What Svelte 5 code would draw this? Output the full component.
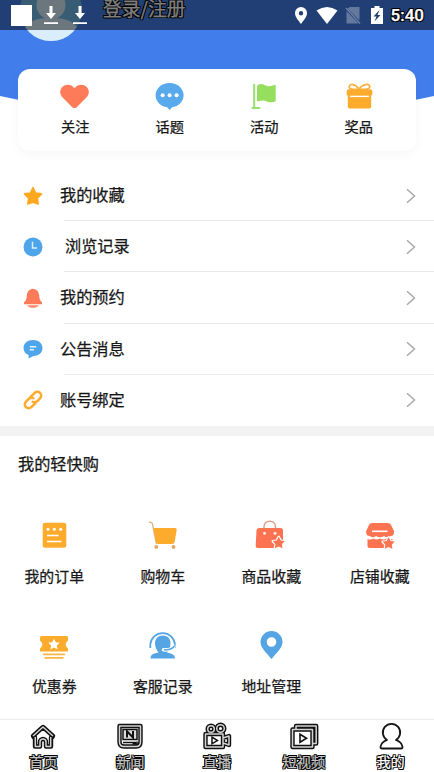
<script>
const shortcuts = [
    { label: '关注', icon: 'heart' },
    { label: '话题', icon: 'topic' },
    { label: '活动', icon: 'flag' },
    { label: '奖品', icon: 'gift' }
];

const menu = [
    { label: '我的收藏', icon: 'star' },
    { label: '浏览记录', icon: 'clock', indent: true },
    { label: '我的预约', icon: 'bell' },
    { label: '公告消息', icon: 'message' },
    { label: '账号绑定', icon: 'link' }
];

const shop = [
    { label: '我的订单', icon: 'order' },
    { label: '购物车', icon: 'cart' },
    { label: '商品收藏', icon: 'bag' },
    { label: '店铺收藏', icon: 'store' },
    { label: '优惠券', icon: 'coupon' },
    { label: '客服记录', icon: 'service' },
    { label: '地址管理', icon: 'pin' }
];

const tabs = [
    { label: '首页', icon: 'home' },
    { label: '新闻', icon: 'news' },
    { label: '直播', icon: 'live' },
    { label: '短视频', icon: 'video' },
    { label: '我的', icon: 'me' }
];

let activeTab = '我的';
</script>

{#snippet smallStar(x, y)}
    <path transform="translate({x} {y})" d="M0-6 2-2.200 6-1.700 3.200 1.400 3.800 5.500 0 3.700-3.800 5.500-3.200 1.400-6-1.700-2-2.200Z" fill="#fb7350" stroke="#fff" stroke-width="2.400" stroke-linejoin="round" paint-order="stroke" />
{/snippet}

{#snippet icon(name, size)}
    <svg width={size} height={size} viewBox="0 0 {size} {size}" fill="none">
        {#if name === 'heart'}
            <path d="M14.500 6.200C17.500 2 23.300 1.700 26.500 4.700C29.700 7.900 29.500 12.300 26.400 15.500L17 24.900Q14.500 27.300 12 24.900L2.600 15.500C-.5 12.300-.6 7.900 2.500 4.700C5.700 1.700 11.500 2 14.500 6.200Z" fill="#fd7b59" />
        {:else if name === 'topic'}
            <path d="M14.600 1C22.500 1 28.600 6.500 28.600 13.200C28.600 19.500 23.500 24.300 17 25.200L14.600 28L12.200 25.200C5.700 24.300.6 19.500.6 13.200C.6 6.500 6.700 1 14.600 1Z" fill="#58aaec" />
            <g fill="#fff">
                <circle cx="7.600" cy="13.200" r="2" />
                <circle cx="14.600" cy="13.200" r="2" />
                <circle cx="21.600" cy="13.200" r="2" />
            </g>
        {:else if name === 'flag'}
            <path d="M5.200 2.500V26M3.500 26H10.500" stroke="#9bdd70" stroke-width="2" stroke-linecap="round" />
            <path d="M8 4C12-.2 15.500 3.500 19 4.200C22 4.700 24.500 3 26.700 2.800V19C22 21.500 19 20 15.500 18.700C12.500 17.800 10 19.300 8 19.500Z" fill="#95de5e" />
        {:else if name === 'gift'}
            <path d="M15 7C11 1.500 6 1.500 5.200 4.500C4.800 7 9 8 15 7ZM15 7C19 1.500 25 1.500 25.800 4.500C26.200 7 21 8 15 7Z" stroke="#fcb03f" stroke-width="1.700" />
            <path d="M5 7.300H26Q28.300 7.300 28.300 9.500V13.300H2.700V9.500Q2.700 7.300 5 7.300ZM3.800 15.500H27.200V24Q27.200 26.600 24.800 26.600H6.200Q3.800 26.600 3.800 24Z" fill="#fcab2d" />
            <path d="M3.800 13H27.200V16H3.800Z" fill="#fcab2d" />
            <path d="M6 14.400H25" stroke="#fff" stroke-width="1.400" />
        {:else if name === 'star'}
            <path d="M12 3.600 14.600 9 20.500 9.900 16.300 14.100 17.200 20 12 18.200 6.800 20 7.700 14.100 3.500 9.900 9.400 9Z" fill="#fda81f" stroke="#fda81f" stroke-width="1.600" stroke-linejoin="round" />
        {:else if name === 'clock'}
            <circle cx="12" cy="12" r="9.500" fill="#4fa5ea" />
            <path d="M11.500 6.800V13H16" stroke="#d9f1ff" stroke-width="1.500" />
        {:else if name === 'bell'}
            <path d="M12 2.800C8.300 3 5.900 6 5.700 10.200C5.600 13.400 4.700 14.700 3 16.200V18.300H21V16.200C19.300 14.700 18.400 13.400 18.300 10.200C18.100 6 15.700 3 12 2.800Z" fill="#fd7b59" />
            <path d="M6 19.300H18C16.500 21.200 14.500 21.800 12 21.800C9.500 21.800 7.500 21.200 6 19.300Z" fill="#fd8a6b" />
        {:else if name === 'message'}
            <path d="M12 3C17.500 3 21.500 6.500 21.500 11C21.500 15.800 17.500 19 12.500 19L7.500 21.500L7.800 18.200C4.500 17 2.500 14.300 2.500 11C2.500 6.500 6.500 3 12 3Z" fill="#4fa5ea" />
            <path d="M8.800 9.700H15.200M8.800 12.700H12.800" stroke="#e4f5ff" stroke-width="1.400" />
        {:else if name === 'link'}
            <g transform="rotate(-45 12 12)" stroke="#fcab2d" stroke-width="2.500" stroke-linecap="round">
                <path d="M11.500 15.800H5.800A3.800 3.800 0 0 1 5.800 8.200H10A3.800 3.800 0 0 1 13.500 11" />
                <path d="M12.500 8.200H18.200A3.800 3.800 0 0 1 18.200 15.800H14A3.800 3.800 0 0 1 10.500 13" />
            </g>
        {:else if name === 'order'}
            <rect x="4.700" y="3.700" width="23.600" height="25" rx="2.500" fill="#fcab2d" />
            <g fill="#fff">
                <circle cx="10" cy="10.300" r="1.500" />
                <circle cx="16.300" cy="10.300" r="1.500" />
                <circle cx="22.700" cy="10.300" r="1.500" />
            </g>
            <path d="M9 16.500H20.500M9 22.500H23.500" stroke="#fff" stroke-width="1.700" />
        {:else if name === 'cart'}
            <path d="M2 3.200C5.500 3 5.500 4.500 6 8L9.500 25" stroke="#dfb27c" stroke-width="1.300" />
            <path d="M6.400 9H28.200Q30 9 29.700 10.800L27.700 22.700Q27.300 25 25 25H11.500Q9.200 25 8.800 22.700Z" fill="#fcab2d" />
            <g fill="#e2a65c">
                <circle cx="9.300" cy="27.900" r="1.900" />
                <circle cx="26.500" cy="27.900" r="1.900" />
            </g>
        {:else if name === 'bag'}
            <path d="M9 9.500V8C9 .3 20.500.3 20.500 8V9.500" stroke="#e49b83" stroke-width="1.500" />
            <path d="M4 9H25.500Q28 9 28 11.500V29H3Q.5 29 .7 26.500L1.500 11.500Q1.600 9 4 9Z" fill="#fb7350" />
            <circle cx="9.500" cy="14.300" r="1.500" fill="#ffe9e1" />
            <circle cx="20" cy="14.300" r="1.500" fill="#ffe9e1" />
            {@render smallStar(23.700, 23.800)}
        {:else if name === 'store'}
            <path d="M8 4H24Q26 4 27 6L30 12Q30.500 17 26.500 17Q23.500 19.500 20 17Q16 19.500 12 17Q8.500 19.500 6 17Q2 17 2 12.500L5 6Q6 4 8 4Z" fill="#fb7350" />
            <path d="M3.500 20Q7 21.300 9.500 19.500Q12.500 21.500 16 19.500Q19.500 21.500 22.500 19.500Q25 21 28.500 20V27Q28.500 29 26.500 29H5.500Q3.500 29 3.500 27Z" fill="#fb7350" />
            <path d="M8 12.300H23.500" stroke="#fff" stroke-width="1.600" />
            {@render smallStar(24.600, 24.300)}
        {:else if name === 'coupon'}
            <path d="M3.500 7H28.500Q30 7 30 8.500V11.500Q25.500 15.500 30 19.500V22.500H2V19.500Q6.500 15.500 2 11.500V8.500Q2 7 3.500 7Z" fill="#fcab2d" />
            <path d="M16 9.700 17.800 13.300 21.800 13.800 18.900 16.500 19.600 20.500 16 18.600 12.400 20.500 13.100 16.500 10.200 13.800 14.200 13.300Z" fill="#fff" />
            <path d="M5 25.400H27M6.500 28.900H25.500" stroke="#fcb545" stroke-width="1.700" />
        {:else if name === 'service'}
            <path d="M3.300 19V15.500A12.400 12.400 0 0 1 28 15.500V19" stroke="#55a4e3" stroke-width="1.700" />
            <path d="M15.800 6.500C20.500 6.500 23.500 9.500 23.500 14C23.500 18.500 22 21.500 20 23.500C24 24.700 28 25 28 29.500H3.500C3.500 25 7 24.700 11.500 23.500C10 21.500 8 18.500 8 14.500C8 9.800 11 6.500 15.800 6.500Z" fill="#55a4e3" />
            <path d="M27 17.500Q24 21.500 16.500 20.700" stroke="#fff" stroke-width="3.600" stroke-linecap="round" />
            <path d="M27.500 17Q24.500 21.300 17.500 20.700" stroke="#55a4e3" stroke-width="1.400" stroke-linecap="round" />
        {:else if name === 'pin'}
            <path fill-rule="evenodd" d="M16.500 2A11 11 0 0 1 27.500 13C27.500 19 21 24.500 16.500 30C12 24.500 5.500 19 5.500 13A11 11 0 0 1 16.500 2ZM16.500 8.200A4.800 4.800 0 1 0 16.500 17.800A4.800 4.800 0 1 0 16.500 8.200Z" fill="#55a4e3" />
        {:else if name === 'home'}
            <path class="outer" d="M5 14 15 5 25 14 24 15.500H23V24.500H18V20A3 3 0 0 0 12 20V24.500H7V15.500H6Z" />
            <path class="inner" d="M5 14 15 5 25 14M7.300 15V24.500H12V20A3 3 0 0 1 18 20V24.500H22.700V15" />
        {:else if name === 'news'}
            <path class="outer" d="M4.500 4H25.500V20Q25.500 24.500 21 24.500H9Q4.500 24.500 4.500 20Z" />
            <path class="inner" d="M4.500 4H25.500V20Q25.500 24.500 21 24.500H9Q4.500 24.500 4.500 20Z" />
            <path d="M8 7.500H22V17.500H8Z" fill="#ddd" stroke="#111" stroke-width="1.500" />
            <path d="M12 15.500V9.300L18 15.500V9" stroke="#111" stroke-width="2" />
            <path d="M8 20.500H21M17.500 22H22V19.500" stroke="#111" stroke-width="1.600" />
        {:else if name === 'live'}
            <circle class="outer" cx="9" cy="7" r="3.300" />
            <circle class="outer" cx="18.500" cy="6.500" r="3.800" />
            <path class="outer" d="M3.500 12H21V25H3.500ZM21 16 27 14V23L21 21" />
            <circle class="inner" cx="9" cy="7" r="3.300" />
            <circle class="inner" cx="18.500" cy="6.500" r="3.800" />
            <path class="inner" d="M3.500 12H21V25H3.500ZM21 16 27 14V23L21 21" />
            <path d="M10 15.200 15.500 18.500 10 21.800Z" stroke="#111" stroke-width="1.500" />
        {:else if name === 'video'}
            <path class="outer" d="M7 7V4H27.200V21.500H24M3.500 7.500H23.500V25H3.500Z" />
            <path class="inner" d="M7 7V4H27.200V21.500H24M3.500 7.500H23.500V25H3.500Z" />
            <path d="M11 12.200 17.500 16.200 11 20.200Z" stroke="#111" stroke-width="1.600" />
        {:else if name === 'me'}
            <path d="M11 18A8.700 8.700 0 1 1 20 18C23.500 19.300 26 21.500 26.500 25Q26.700 26.500 25 26.500H6Q4.300 26.500 4.500 25C5 21.500 7.500 19.300 11 18Z" fill="#fff" stroke="#151515" stroke-width="1.800" stroke-linejoin="round" />
        {/if}
    </svg>
{/snippet}

<div class="page">
    <header>
        <svg class="wave" width="434" height="125" viewBox="0 0 434 125">
            <path d="M0 0H434V96Q217 144 0 96Z" fill="#427eeb" />
            <clipPath id="avatar"><circle cx="51" cy="10" r="31" /></clipPath>
            <g clip-path="url(#avatar)">
                <path d="M20-21H82V41H20Z" fill="#72b9ea" />
                <circle cx="51" cy="5" r="14.500" fill="#d9edfb" />
                <path d="M24 42V29C28 21 37 18 51 18C65 18 74 21 78 29V42Z" fill="#d9edfb" />
            </g>
        </svg>
        <div class="login">登录/注册</div>
        <div class="status">
            <div class="notices">
                <i></i>
                {#each [1, 2] as n}
                    <svg width="14" height="20" viewBox="0 0 14 20">
                        <path d="M5.500 1H8.500V8H12L7 14 2 8H5.500ZM0 17.300H14V19H0Z" fill="#fff" />
                    </svg>
                {/each}
            </div>
            <div class="signals">
                <svg width="88" height="20" viewBox="0 0 88 20" fill="#fff">
                    <path fill-rule="evenodd" d="M6 2A6 6 0 0 1 12 8C12 12 8.500 15.500 6 19C3.500 15.500 0 12 0 8A6 6 0 0 1 6 2ZM6 6A2.200 2.200 0 1 0 6 10.400A2.200 2.200 0 1 0 6 6Z" />
                    <path d="M21.500 5.500Q32 -1.500 42.500 5.500L32 19Z" />
                    <path d="M55 2H64.500V15.500L52.500 3.500ZM51.500 6 63.500 18.500H51.500Z" opacity=".3" />
                    <path d="M51 3 65 18.500" stroke="#fff" stroke-width="1.300" opacity=".35" />
                    <path d="M79.500 1H84.500V3H88V19H76V3H79.500Z" />
                    <path d="M84.500 5 78.500 11.500H81.500L79.500 16.500 85.500 10H82.500Z" fill="#21406f" />
                </svg>
                <span>5:40</span>
            </div>
        </div>
    </header>

    <section class="card">
        {#each shortcuts as item}
            <div class="shortcut">
                {@render icon(item.icon, 30)}
                <span>{item.label}</span>
            </div>
        {/each}
    </section>

    <section class="menu">
        {#each menu as item}
            <div class="row">
                {@render icon(item.icon, 24)}
                <div class="label" class:indent={item.indent}>{item.label}</div>
                <svg class="arrow" width="10" height="16" viewBox="0 0 10 16">
                    <path d="M1 1.200 8.500 8 1 14.800" fill="none" stroke="#a9a9a9" stroke-width="1.500" />
                </svg>
            </div>
        {/each}
    </section>

    <section class="shop">
        <h2>我的轻快购</h2>
        <div class="grid">
            {#each shop as item}
                <div class="cell">
                    {@render icon(item.icon, 32)}
                    <span>{item.label}</span>
                </div>
            {/each}
        </div>
    </section>

    <nav>
        {#each tabs as tab}
            <button class:active={tab.label === activeTab} on:click={() => activeTab = tab.label}>
                {@render icon(tab.icon, 30)}
                <span>{tab.label}</span>
            </button>
        {/each}
    </nav>
</div>

<style>
    :global(body) {
        margin: 0;
        background: #fff;
    }

    .page {
        display: flex;
        flex-direction: column;
        width: 434px;
        height: 772px;
        overflow: hidden;
        background: #fff;
        color: #171717;
        font-family: "Noto Sans CJK SC", sans-serif;
        -webkit-text-stroke: 0.25px currentColor;
    }

    svg {
        display: block;
        flex: none;
    }

    header {
        position: relative;
        flex: none;
        height: 69px;
    }

    .wave {
        position: absolute;
        top: 0;
        left: 0;
    }

    .login {
        position: absolute;
        top: 0;
        left: 103px;
        font-size: 18.8px;
        line-height: 15px;
        color: #fff;
        text-shadow: 1px 0 #000, -1px 0 #000, 0 1px #000, 0 -1px #000, 1px 1px #000, -1px -1px #000, 1px -1px #000, -1px 1px #000;
    }

    .status {
        position: absolute;
        inset: 0 0 auto 0;
        display: flex;
        justify-content: space-between;
        box-sizing: border-box;
        height: 30px;
        padding: 5px 10px 0 11px;
        background: rgba(0, 0, 0, 0.5);
    }

    .notices {
        display: flex;
        gap: 15px;
    }

    .notices i {
        width: 21px;
        height: 21px;
        margin-right: -3px;
        background: #fff;
    }

    .signals {
        display: flex;
        gap: 8px;
    }

    .signals span {
        font-family: Roboto, sans-serif;
        font-size: 17px;
        font-weight: 500;
        line-height: 21px;
        color: #fff;
        text-shadow: 1px 0 #000, -1px 0 #000, 0 1px #000, 0 -1px #000, 1px 1px #000, -1px -1px #000, 1px -1px #000, -1px 1px #000;
    }

    .card {
        position: relative;
        display: flex;
        flex: none;
        box-sizing: border-box;
        height: 82px;
        margin: 0 18px 19px;
        padding: 13px 10px 0;
        border-radius: 12px;
        background: #fff;
        box-shadow: 0 3px 12px rgba(0, 0, 0, 0.04);
    }

    .shortcut {
        display: flex;
        flex: 1;
        flex-direction: column;
        align-items: center;
        gap: 4px;
        font-size: 14.2px;
        line-height: 20px;
    }

    .menu {
        flex: none;
        border-bottom: 10px solid #f3f3f3;
    }

    .row {
        display: flex;
        align-items: center;
        height: 51.2px;
        padding: 0 18px 0 21px;
        background: linear-gradient(#e9e9e9, #e9e9e9) 64px 100% / 370px 1px no-repeat;
    }

    .row:last-child {
        background: none;
    }

    .label {
        flex: 1;
        margin: 0 0 3px 15px;
        font-size: 16.2px;
        line-height: 24px;
    }

    .label.indent {
        margin-left: 20px;
    }

    .shop {
        flex: 1;
        min-height: 0;
    }

    h2 {
        margin: 15px 0 0 18px;
        font-size: 16.2px;
        font-weight: 400;
        line-height: 24px;
    }

    .grid {
        display: grid;
        grid-template-columns: repeat(4, 1fr);
        grid-template-rows: 110px 76px;
        margin-top: 44px;
    }

    .cell {
        display: flex;
        flex-direction: column;
        align-items: center;
        gap: 14px;
        font-size: 14.9px;
        line-height: 22px;
    }

    nav {
        display: flex;
        flex: none;
        box-sizing: border-box;
        height: 53px;
        border-top: 1px solid #ededed;
    }

    button {
        display: flex;
        flex: 1;
        flex-direction: column;
        align-items: center;
        gap: 0;
        padding: 2px 0 0;
        border: 0;
        background: none;
        font-family: inherit;
        font-size: 14.2px;
        line-height: 18px;
        color: #c4c4c4;
        text-shadow: 1px 0 #000, -1px 0 #000, 0 1px #000, 0 -1px #000, 1px 1px #000, -1px -1px #000, 1px -1px #000, -1px 1px #000;
    }

    button.active {
        color: #fff;
    }

    .outer {
        stroke: #111;
        stroke-width: 4.4;
        stroke-linejoin: round;
    }

    .inner {
        stroke: #d4d4d4;
        stroke-width: 1.5;
        stroke-linejoin: round;
    }
</style>
